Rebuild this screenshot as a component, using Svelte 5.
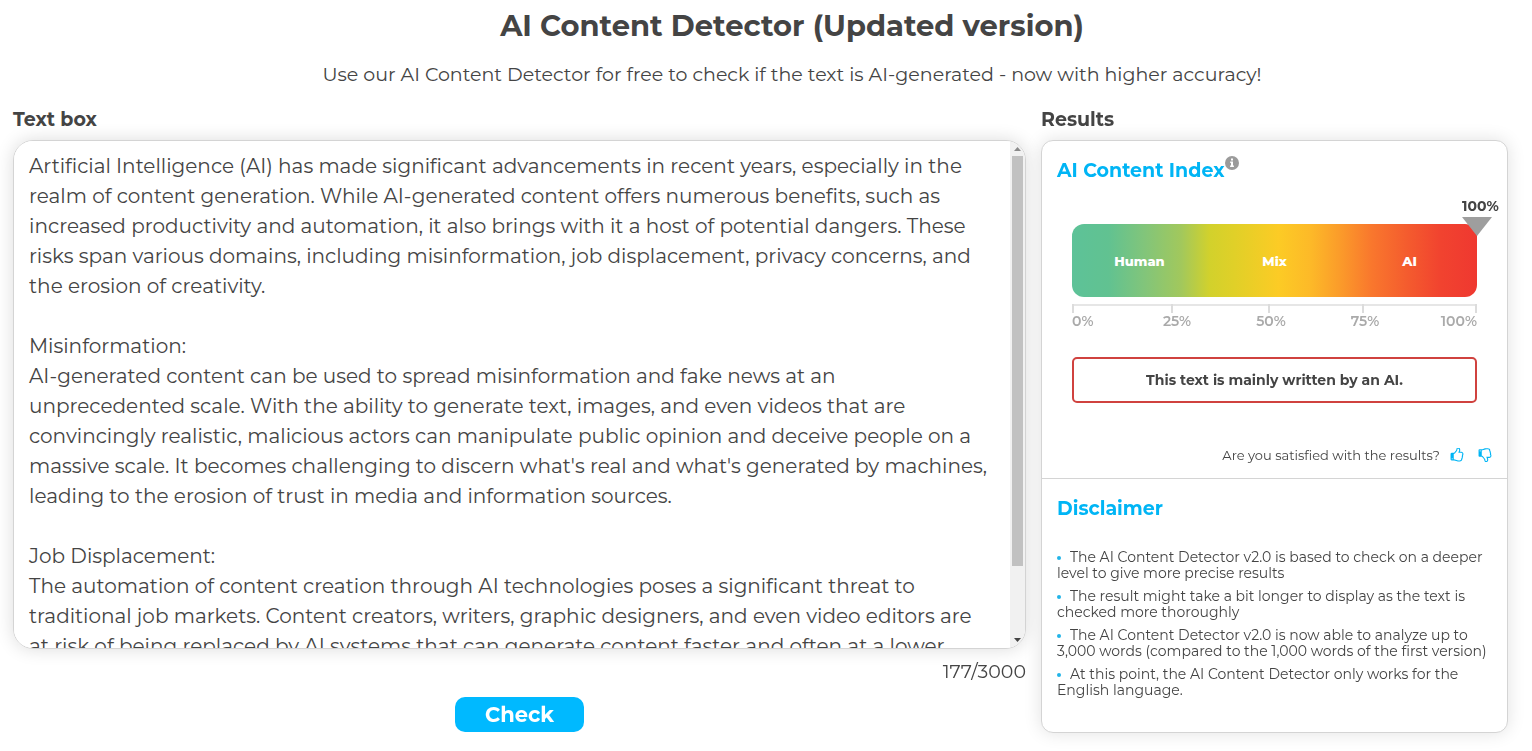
<script>
  let text = $state(`Artificial Intelligence (AI) has made significant advancements in recent years, especially in the realm of content generation. While AI-generated content offers numerous benefits, such as increased productivity and automation, it also brings with it a host of potential dangers. These risks span various domains, including misinformation, job displacement, privacy concerns, and the erosion of creativity.

Misinformation:
AI-generated content can be used to spread misinformation and fake news at an unprecedented scale. With the ability to generate text, images, and even videos that are convincingly realistic, malicious actors can manipulate public opinion and deceive people on a massive scale. It becomes challenging to discern what's real and what's generated by machines, leading to the erosion of trust in media and information sources.

Job Displacement:
The automation of content creation through AI technologies poses a significant threat to traditional job markets. Content creators, writers, graphic designers, and even video editors are at risk of being replaced by AI systems that can generate content faster and often at a lower`);
  let area;
  let thumb = $state({ top: 0, size: 86 });
  const sync = () => {
    thumb = {
      top: (area.scrollTop / area.scrollHeight) * 100,
      size: (area.clientHeight / area.scrollHeight) * 100
    };
  };
  $effect(() => {
    text;
    sync();
  });

  const score = 100;
  const ticks = [
    { x: 1, label: '0%', lx: 0, anchor: 'start' },
    { x: 100, label: '25%', lx: 105, anchor: 'middle' },
    { x: 197, label: '50%', lx: 199, anchor: 'middle' },
    { x: 291, label: '75%', lx: 293, anchor: 'middle' },
    { x: 404, label: '100%', lx: 405, anchor: 'end' }
  ];
  const notes = [
    'The AI Content Detector v2.0 is based to check on a deeper level to give more precise results',
    'The result might take a bit longer to display as the text is checked more thoroughly',
    'The AI Content Detector v2.0 is now able to analyze up to 3,000 words (compared to the 1,000 words of the first version)',
    'At this point, the AI Content Detector only works for the English language.'
  ];
  const hand = 'M384 1344q0-26-19-45t-45-19-45 19-19 45 19 45 45 19 45-19 19-45zm1152-576q0-51-39-89.5t-89-38.5h-352q0-58 48-159.5t48-160.5q0-98-32-145t-128-47q-26 26-38 85t-30.5 125.5-59.5 109.5q-22 23-77 91-4 5-23 30t-31.5 41-34.5 42.5-40 44-38.5 35.5-40 27-35.5 9h-32v640h32q13 0 31.5 3t33 6.5 38 11 35 11.5 35.5 12.5 29 10.500q211 73 342 73h121q192 0 192-167 0-26-5-56 30-16 47.5-52.5t17.5-73.5-18-69q53-50 53-119 0-25-10-55.5t-25-47.5q32-1 53.5-47t21.5-81zm128-1q0 89-49 163 9 33 9 69 0 77-38 144 3 21 3 43 0 101-60 178 1 139-85 219.5t-227 80.5h-129q-96 0-189.500-22.500t-216.500-65.500q-116-40-138-40h-288q-53 0-90.500-37.500t-37.500-90.500v-640q0-53 37.500-90.500t90.500-37.500h274q36-24 137-155 58-75 107-128 24-25 35.500-85.500t30.500-126.500 62-108q39-37 90-37 84 0 151 32.500t102 101.500 35 186q0 93-48 192h176q104 0 180 76t76 179z';
</script>

<main>
  <header>
    <h1>AI Content Detector (Updated version)</h1>
    <p>Use our AI Content Detector for free to check if the text is AI-generated - now with higher accuracy!</p>
  </header>

  <div class="columns">
    <section class="editor">
      <label class="heading" for="content">Text box</label>
      <div class="box">
        <textarea id="content" spellcheck="false" bind:this={area} bind:value={text} onscroll={sync}></textarea>
        <div class="scrollbar" aria-hidden="true">
          <svg viewBox="0 0 15 15"><path d="M4 10h7L7.5 6z" fill="#8a8a8a" /></svg>
          <div class="track">
            <div class="thumb" style="height: {thumb.size}%; margin-top: {thumb.top}%"></div>
          </div>
          <svg viewBox="0 0 15 15"><path d="M4 5h7L7.5 9z" fill="#444" /></svg>
        </div>
      </div>
      <p class="count">177/3000</p>
      <button class="check" type="button">Check</button>
    </section>

    <section class="results">
      <h2 class="heading">Results</h2>
      <div class="card">
        <div class="index">
          <h3>AI Content Index<svg class="info" viewBox="0 0 14 14" aria-hidden="true"><circle cx="7" cy="7" r="7" fill="#9b9b9b" /><path d="M6 2.6h2v1.9H6zM5.2 5.6H8v4h.9v1.3H5.1V9.6H6V6.9h-.8z" fill="#fff" /></svg></h3>

          <div class="gauge">
            <div class="bar"><span>Human</span><span>Mix</span><span>AI</span></div>
            <div class="marker" style="left: {score}%">
              <span>{score}%</span>
              <svg viewBox="0 0 30 19" aria-hidden="true"><path d="M0 0h30L15 19z" fill="#9e9e9e" /></svg>
            </div>
          </div>
          <svg class="axis" viewBox="0 0 405 28">
            <path d="M0 2H405" stroke="#e6e6e6" stroke-width="2" />
            {#each ticks as t}
              <path d="M{t.x} 1v9" stroke="#dcdcdc" stroke-width="2" />
              <text x={t.lx} y="23" text-anchor={t.anchor}>{t.label}</text>
            {/each}
          </svg>

          <p class="verdict">This text is mainly written by an AI.</p>

          <div class="feedback">
            <span>Are you satisfied with the results?</span>
            <button type="button" aria-label="Yes">
              <svg viewBox="64 64 1664 1664"><path d={hand} /></svg>
            </button>
            <button type="button" aria-label="No">
              <svg viewBox="64 64 1664 1664"><path d={hand} transform="matrix(1 0 0 -1 0 1750)" /></svg>
            </button>
          </div>
        </div>

        <div class="disclaimer">
          <h3>Disclaimer</h3>
          <ul>
            {#each notes as note}
              <li>{note}</li>
            {/each}
          </ul>
        </div>
      </div>
    </section>
  </div>
</main>

<style>
  :global(body) { background: #fff; }
  main {
    font-family: Montserrat, Inter, sans-serif;
    color: #444;
    padding: 0 24px 20px 13px;
  }
  main :global(*) { box-sizing: border-box; }
  h1, h2, h3, p, ul { margin: 0; padding: 0; }
  header { text-align: center; padding: 6px 25px 0 64px; margin-right: -24px; }
  h1 { font-size: 29px; line-height: 40px; font-weight: 700; }
  header p { font-size: 19px; line-height: 24px; margin-top: 17px; }

  .columns {
    display: grid;
    grid-template-columns: minmax(0, 1013fr) minmax(0, 467fr);
    gap: 15px;
    margin-top: 21px;
  }
  .heading {
    display: block;
    font-size: 19px;
    line-height: 24px;
    font-weight: 700;
    margin-bottom: 8px;
  }
  .box {
    display: flex;
    border: 1px solid #d4d4d4;
    border-radius: 20px;
    overflow: hidden;
    height: 509px;
    box-shadow: 0 0 18px rgba(0, 0, 0, 0.14);
  }
  textarea {
    flex: 1;
    min-width: 0;
    border: 0;
    outline: 0;
    resize: none;
    scrollbar-width: none;
    padding: 10px 15px 70px;
    font: 400 20px/30px Montserrat, Inter, sans-serif;
    color: #444;
    background: #fff;
  }
  .scrollbar { display: flex; flex-direction: column; width: 15px; background: #f1f1f1; }
  .scrollbar svg { width: 15px; height: 15px; }
  .track { flex: 1; min-height: 0; padding: 0 2px; }
  .thumb { background: #c1c1c1; }

  .count { text-align: right; font-size: 19px; line-height: 24px; margin-top: 11px; }
  .check {
    display: block;
    width: 129px;
    height: 35px;
    margin: 13px auto 0;
    border: 0;
    border-radius: 10px;
    background: #00b9ff;
    color: #fff;
    font: 700 21px/24px Montserrat, Inter, sans-serif;
  }

  .card {
    border: 1px solid #d4d4d4;
    border-radius: 12px;
    background: #fff;
    box-shadow: 0 0 18px rgba(0, 0, 0, 0.12);
  }
  h3 { display: flex; font-size: 19px; line-height: 24px; font-weight: 700; color: #00b5f5; }
  .index { padding: 18px 15px 14px; border-bottom: 1px solid #d4d4d4; }
  .info { width: 14px; height: 14px; margin: -3px 0 0 1px; }
  .gauge { position: relative; margin: 41px 15px 0; }
  .bar {
    display: grid;
    grid-template-columns: repeat(3, 1fr);
    align-items: center;
    height: 73px;
    border-radius: 12px;
    text-align: center;
    color: #fff;
    font-size: 13px;
    font-weight: 800;
    background: linear-gradient(90deg, #5dc298 0%, #61c291 9%, #82c57a 18%, #a2c85c 27%, #d2d12c 34%, #e0d028 40%, #fccb25 51%, #fdb928 59%, #fb9c2a 66%, #f9772d 74%, #f45b2e 83%, #f1432f 91%, #ef3830 100%);
  }
  .marker {
    position: absolute;
    bottom: 61px;
    width: 30px;
    margin-left: -15px;
    display: grid;
    font-size: 14px;
    line-height: 18px;
    font-weight: 700;
  }
  .marker svg { width: 30px; height: 19px; margin-top: 2px; }
  .axis { display: block; margin: 6px 15px 0; width: calc(100% - 30px); overflow: visible; }
  .axis text { fill: #aaa; font-size: 14px; font-weight: 600; }
  .verdict {
    margin: 26px 15px 0;
    border: 2px solid #d0423f;
    border-radius: 5px;
    padding: 11px;
    text-align: center;
    font-size: 14px;
    line-height: 20px;
    font-weight: 700;
  }
  .feedback {
    display: flex;
    justify-content: flex-end;
    align-items: center;
    gap: 10px;
    margin-top: 43px;
    font-size: 13px;
    line-height: 18px;
  }
  .feedback button { width: 14px; height: 14px; padding: 0; border: 0; background: none; }
  .feedback button + button { margin-left: 4px; }
  .feedback svg { display: block; width: 14px; height: 14px; }
  .feedback path { fill: #00b5f5; }

  .disclaimer { padding: 18px 15px 34px; }
  ul { list-style: none; margin-top: 28px; display: grid; gap: 7px; font-size: 14px; line-height: 16px; }
  li::before {
    content: '';
    display: inline-block;
    width: 4px;
    height: 4px;
    border-radius: 50%;
    background: #22b4e8;
    margin-right: 9px;
    vertical-align: 2px;
  }
</style>
